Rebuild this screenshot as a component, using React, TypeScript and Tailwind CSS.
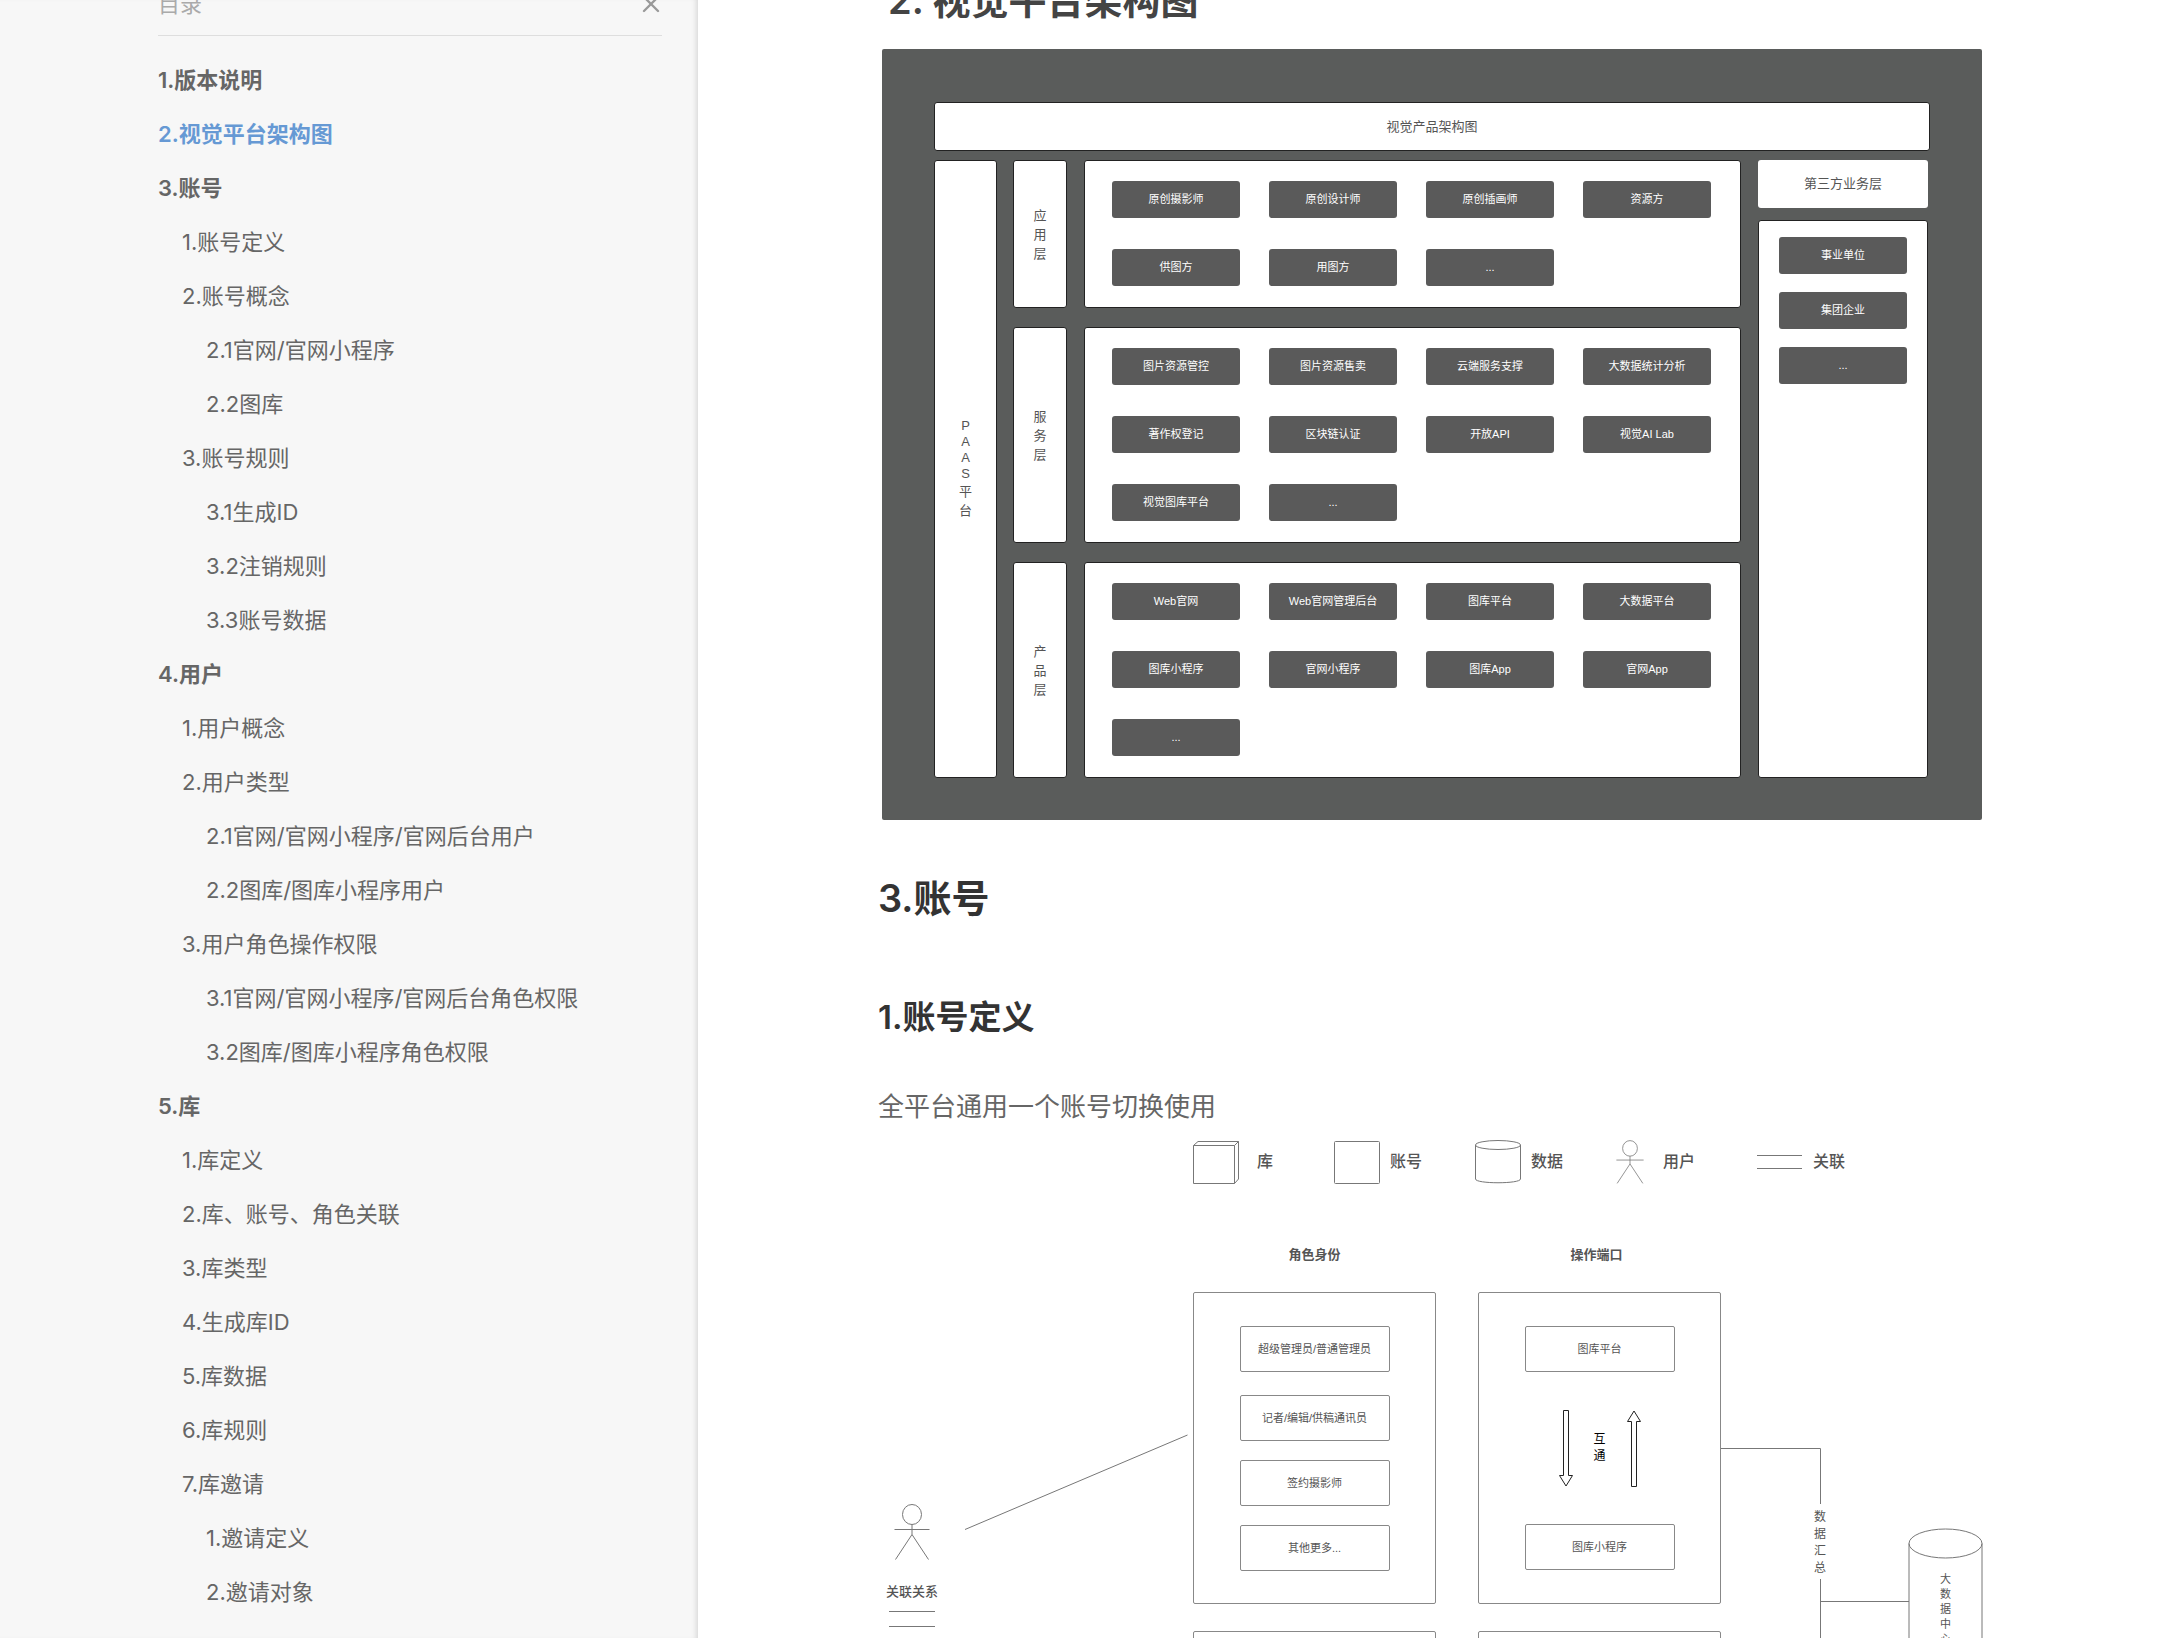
import { ReactNode } from "react";
import { X } from "lucide-react";

type TocItem = { text: string; level: number; active?: boolean };

const toc: TocItem[] = [
  { text: "1.版本说明", level: 0 },
  { text: "2.视觉平台架构图", level: 0, active: true },
  { text: "3.账号", level: 0 },
  { text: "1.账号定义", level: 1 },
  { text: "2.账号概念", level: 1 },
  { text: "2.1官网/官网小程序", level: 2 },
  { text: "2.2图库", level: 2 },
  { text: "3.账号规则", level: 1 },
  { text: "3.1生成ID", level: 2 },
  { text: "3.2注销规则", level: 2 },
  { text: "3.3账号数据", level: 2 },
  { text: "4.用户", level: 0 },
  { text: "1.用户概念", level: 1 },
  { text: "2.用户类型", level: 1 },
  { text: "2.1官网/官网小程序/官网后台用户", level: 2 },
  { text: "2.2图库/图库小程序用户", level: 2 },
  { text: "3.用户角色操作权限", level: 1 },
  { text: "3.1官网/官网小程序/官网后台角色权限", level: 2 },
  { text: "3.2图库/图库小程序角色权限", level: 2 },
  { text: "5.库", level: 0 },
  { text: "1.库定义", level: 1 },
  { text: "2.库、账号、角色关联", level: 1 },
  { text: "3.库类型", level: 1 },
  { text: "4.生成库ID", level: 1 },
  { text: "5.库数据", level: 1 },
  { text: "6.库规则", level: 1 },
  { text: "7.库邀请", level: 1 },
  { text: "1.邀请定义", level: 2 },
  { text: "2.邀请对象", level: 2 },
];

const levelClass = ["font-semibold", "pl-6", "pl-12"];

const layers = [
  {
    name: "应用层",
    height: "h-[148px]",
    items: ["原创摄影师", "原创设计师", "原创插画师", "资源方", "供图方", "用图方", "..."],
  },
  {
    name: "服务层",
    height: "h-[216px]",
    items: [
      "图片资源管控", "图片资源售卖", "云端服务支撑", "大数据统计分析",
      "著作权登记", "区块链认证", "开放API", "视觉AI Lab",
      "视觉图库平台", "...",
    ],
  },
  {
    name: "产品层",
    height: "h-[216px]",
    items: [
      "Web官网", "Web官网管理后台", "图库平台", "大数据平台",
      "图库小程序", "官网小程序", "图库App", "官网App",
      "...",
    ],
  },
];

const partners = ["事业单位", "集团企业", "..."];

const roles = ["超级管理员/普通管理员", "记者/编辑/供稿通讯员", "签约摄影师", "其他更多..."];

function Sidebar() {
  return (
    <aside className="w-[698px] shrink-0 bg-[#f7f7f7] pl-[158px] pr-9 shadow-[inset_-5px_0_5px_-3px_rgba(0,0,0,0.12)]">
      <div className="-mt-4 flex h-[52px] items-start justify-between border-b border-[#dedede] text-[#aaa]">
        <span className="text-[22px] leading-[40px]">目录</span>
        <button type="button" aria-label="关闭目录" className="-mr-[3px] flex h-[40px] items-center text-[#999]">
          <X size={28} strokeWidth={2} />
        </button>
      </div>
      <nav className="mt-[17px]">
        <ul>
          {toc.map((item, i) => (
            <li key={i} className={levelClass[item.level]}>
              <a
                href="#"
                className={
                  item.active
                    ? "block text-[22px] leading-[54px] whitespace-nowrap text-[#6699d4]"
                    : "block text-[22px] leading-[54px] whitespace-nowrap text-[#666]"
                }
              >
                {item.text}
              </a>
            </li>
          ))}
        </ul>
      </nav>
    </aside>
  );
}

function Chip({ children }: { children: ReactNode }) {
  return (
    <div className="flex h-[37px] items-center justify-center rounded-[3px] bg-[#5a5a5a] text-[11px] whitespace-nowrap text-white">
      {children}
    </div>
  );
}

// one glyph per line, latin letters sit a little tighter
function VerticalText({ text }: { text: string }) {
  return (
    <div className="flex flex-col items-center text-[13px]">
      {text.split("").map((ch, i) => (
        <span key={i} className={ch < "z" ? "leading-[16px]" : "leading-[19px]"}>{ch}</span>
      ))}
    </div>
  );
}

function ArchitectureDiagram() {
  return (
    <section className="mt-[25px] rounded-[2px] bg-[#5a5c5b] pt-[53px] pr-[52px] pb-[42px] pl-[52px] font-['Liberation_Sans','Noto_Sans_CJK_SC',sans-serif] text-[#555]">
      <div className="flex h-[49px] items-center justify-center rounded-[3px] border border-[#222] bg-white text-[13px]">
        视觉产品架构图
      </div>

      <div className="mt-[9px] mr-[2px] flex">
        <div className="flex w-[63px] items-center justify-center rounded-[3px] border border-[#222] bg-white">
          <VerticalText text="PAAS平台" />
        </div>

        <div className="ml-4 flex flex-1 flex-col gap-[19px]">
          {layers.map((layer) => (
            <div key={layer.name} className={`flex gap-[17px] ${layer.height}`}>
              <div className="flex w-[54px] items-center justify-center rounded-[3px] border border-[#222] bg-white">
                <VerticalText text={layer.name} />
              </div>
              <div className="grid flex-1 grid-cols-4 content-start gap-x-[29px] gap-y-[31px] rounded-[3px] border border-[#222] bg-white pt-5 pr-[29px] pl-[27px]">
                {layer.items.map((item) => (
                  <Chip key={item}>{item}</Chip>
                ))}
              </div>
            </div>
          ))}
        </div>

        <div className="ml-[17px] flex w-[170px] flex-col gap-3">
          <div className="flex h-12 items-center justify-center rounded-[3px] bg-white text-[13px]">
            第三方业务层
          </div>
          <div className="flex flex-1 flex-col gap-[18px] rounded-[3px] border border-[#222] bg-white px-5 pt-4">
            {partners.map((item) => (
              <Chip key={item}>{item}</Chip>
            ))}
          </div>
        </div>
      </div>
    </section>
  );
}

function UserIcon({ width, height }: { width: number; height: number }) {
  return (
    <svg width={width} height={height} viewBox="0 0 36 56" fill="none" stroke="#777" className="shrink-0">
      <ellipse cx="18" cy="10.5" rx="9.5" ry="10" />
      <path d="M18 20.5V30.5M0.5 25.5H35.5M18 30.5L1.5 55.5M18 30.5L34.5 55.5" />
    </svg>
  );
}

function Legend() {
  return (
    <div className="absolute top-4 left-[311px] flex h-11 text-[16px] font-medium text-[#555]">
      <div className="flex w-[141px] items-center">
        <svg width="46" height="44" fill="none" stroke="#777">
          <path d="M0.5 5.5H41.5V43.5H0.5ZM0.5 5.5L5 1.5H45.5V39L41.5 43.5M41.5 5.5L45.5 1.5" />
        </svg>
        <span className="w-[52px] text-center">库</span>
      </div>
      <div className="flex w-[141px] items-center">
        <svg width="46" height="44" fill="none" stroke="#777">
          <rect x="0.5" y="1.5" width="45" height="42" rx="1" />
        </svg>
        <span className="w-[52px] text-center">账号</span>
      </div>
      <div className="flex w-[141px] items-center">
        <svg width="46" height="44" fill="none" stroke="#777">
          <ellipse cx="23" cy="5" rx="22.5" ry="4.5" />
          <path d="M0.5 5V39C0.5 44 45.5 44 45.5 39V5" />
        </svg>
        <span className="w-[52px] text-center">数据</span>
      </div>
      <div className="flex w-[141px] items-center">
        <UserIcon width={28} height={44} />
        <span className="w-[70px] text-center">用户</span>
      </div>
      <div className="flex w-[141px] items-center">
        <svg width="46" height="44" fill="none" stroke="#777">
          <path d="M0 15.5H45M0 28.5H45" />
        </svg>
        <span className="w-[52px] text-center">关联</span>
      </div>
    </div>
  );
}

function Node({ children }: { children: ReactNode }) {
  return (
    <div className="flex h-[46px] w-[150px] shrink-0 items-center justify-center rounded-[2px] border border-[#888] text-[11px] whitespace-nowrap">
      {children}
    </div>
  );
}

function AccountDiagram() {
  return (
    <section className="relative h-[640px] font-['Liberation_Sans','Noto_Sans_CJK_SC',sans-serif] text-[#555]">
      <Legend />

      {/* connectors and the data store */}
      <svg className="absolute inset-0 h-full w-full overflow-visible" fill="none" stroke="#777">
        <path d="M83 405.5L305.5 311" />
        <path d="M839 324.5H938.5V380M938.5 455V640M938.5 477.5H1027" />
        <ellipse cx="1063.5" cy="419.5" rx="36.5" ry="14.5" />
        <path d="M1027 419.5V640M1100 419.5V640" />
      </svg>

      <div className="absolute top-[122px] left-[311px] w-[243px] text-center text-[13px] leading-[18px] font-bold">角色身份</div>
      <div className="absolute top-[122px] left-[593px] w-[243px] text-center text-[13px] leading-[18px] font-bold">操作端口</div>

      <div className="absolute top-[168px] left-[311px] flex h-[312px] w-[243px] flex-col items-center gap-[19px] rounded-[2px] border border-[#888] pt-[33px]">
        {roles.map((role, i) => (
          <div key={role} className={i === 0 ? "mb-1" : ""}>
            <Node>{role}</Node>
          </div>
        ))}
      </div>

      <div className="absolute top-[168px] left-[596px] flex h-[312px] w-[243px] flex-col items-center justify-between rounded-[2px] border border-[#888] py-[33px]">
        <Node>图库平台</Node>
        <div className="flex w-[82px] items-center justify-between text-black">
          <svg width="14" height="77" fill="none" stroke="#222">
            <path d="M4.5 0.5H9.5V65.5H13.5L7 76L0.5 65.5H4.5Z" />
          </svg>
          <div className="w-3 text-[12px] leading-[17px]">互通</div>
          <svg width="14" height="77" fill="none" stroke="#222">
            <path d="M4.5 76.5H9.5V11.5H13.5L7 1L0.5 11.5H4.5Z" />
          </svg>
        </div>
        <Node>图库小程序</Node>
      </div>

      <div className="absolute top-[507px] left-[311px] h-[133px] w-[243px] rounded-[2px] border border-[#888]" />
      <div className="absolute top-[507px] left-[596px] h-[133px] w-[243px] rounded-[2px] border border-[#888]" />

      <div className="absolute top-[385px] left-[932px] w-3 text-[12px] leading-[17px]">数据汇总</div>
      <div className="absolute top-[448px] left-[1058px] w-[11px] text-[11px] leading-[15px]">大数据中心</div>

      <div className="absolute top-[380px] left-0 flex w-[60px] flex-col items-center">
        <UserIcon width={36} height={56} />
        <span className="mt-[23px] text-[13px] leading-[18px] font-medium whitespace-nowrap">关联关系</span>
        <svg width="46" height="16" fill="none" stroke="#777" className="mt-[10px]">
          <path d="M0 0.5H46M0 15.5H46" />
        </svg>
      </div>
    </section>
  );
}

export default function App() {
  return (
    <div className="flex h-screen overflow-hidden bg-white font-['Inter','Noto_Sans_CJK_SC',sans-serif]">
      <Sidebar />
      <main className="min-w-0 flex-1 pr-[178px] pl-[180px]">
        <h1 className="-mt-6 pl-[10px] text-[38px] leading-[48px] font-semibold text-[#444]">2. 视觉平台架构图</h1>
        <div className="pl-1">
          <ArchitectureDiagram />
        </div>
        <h1 className="mt-[54px] text-[38px] leading-[48px] font-semibold text-[#333]">3.账号</h1>
        <h2 className="mt-[71px] text-[33px] leading-[48px] font-semibold text-[#333]">1.账号定义</h2>
        <p className="mt-[49px] text-[26px] leading-[34px] text-[#666]">全平台通用一个账号切换使用</p>
        <div className="pl-1">
          <AccountDiagram />
        </div>
      </main>
    </div>
  );
}
